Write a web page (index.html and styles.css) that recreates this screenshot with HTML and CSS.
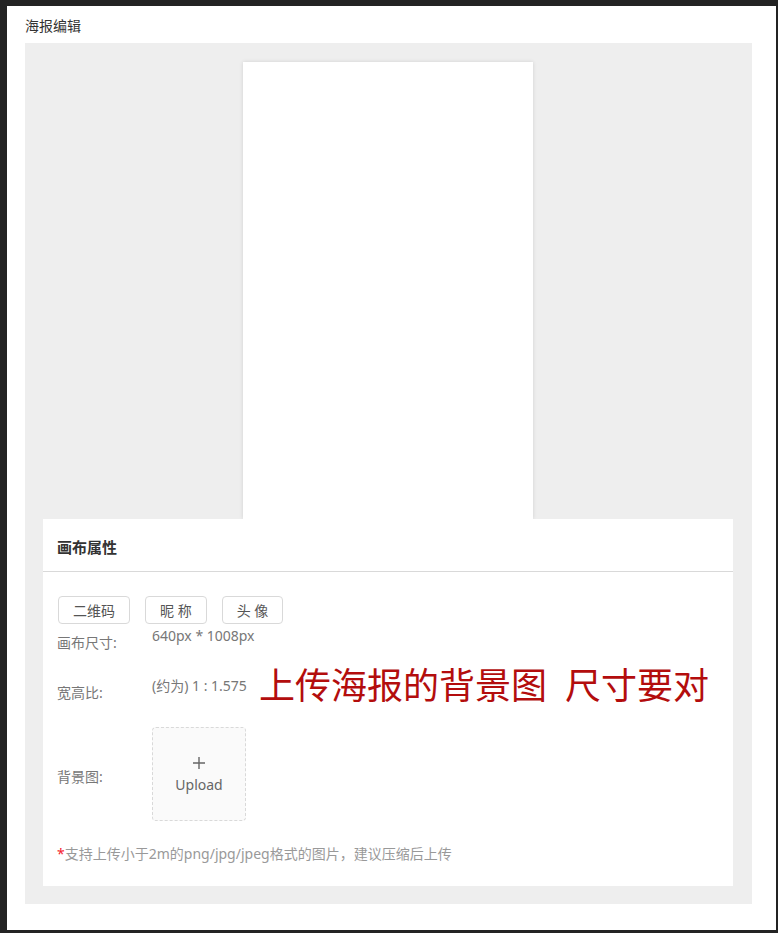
FILE: index.html
```html
<!DOCTYPE html>
<html lang="zh-CN">

<head>
  <meta charset="UTF-8" />
  <meta name="viewport" content="width=device-width, initial-scale=1" />
  <title>海报编辑</title>

  <link rel="stylesheet" href="styles.css">
</head>

<body>

  <div class="panel">
    <div class="page-title">海报编辑</div>

    <div class="stage">
      <div class="poster-canvas"></div>

      <div class="card">
        <div class="card-header">画布属性</div>

        <div class="card-body">
          <div class="tool-buttons">
            <button type="button">二维码</button>
            <button type="button">昵 称</button>
            <button type="button">头 像</button>
          </div>

          <div class="form-row row-size">
            <div class="form-label">画布尺寸:</div>
            <div class="form-value">640px * 1008px</div>
          </div>

          <div class="form-row row-ratio">
            <div class="form-label">宽高比:</div>
            <div class="form-value">
              <span>(约为) 1 : 1.575</span>
              <span class="annotation">上传海报的背景图<span class="annotation-gap"></span>尺寸要对</span>
            </div>
          </div>

          <div class="form-row row-bg">
            <div class="form-label">背景图:</div>
            <div class="upload-box">
              <svg class="upload-plus" width="14" height="14" viewBox="0 0 14 14">
                <path d="M7 1v12M1 7h12" stroke="#666" stroke-width="1.4" fill="none" />
              </svg>
              <div class="upload-text">Upload</div>
            </div>
          </div>

          <div class="upload-note"><span class="required">*</span>支持上传小于2m的png/jpg/jpeg格式的图片，建议压缩后上传</div>
        </div>
      </div>
    </div>
  </div>

</body>
</html>
```

FILE: styles.css
```css
body {
  margin: 0;
  background: #232323;
  font-family: "Noto Sans", "Noto Sans CJK SC", sans-serif;
  color: #333;
}

.panel {
  margin: 6px 2px 3px 7px;
  height: 924px;
  box-sizing: border-box;
  background: #ffffff;
  padding: 10px 24px 0 18px;
}

.page-title {
  font-size: 14px;
  line-height: 20px;
  color: #333;
  margin-bottom: 7px;
}

.stage {
  background: #eeeeee;
  padding: 19px 19px 18px 18px;
}

.poster-canvas {
  width: 290px;
  height: 457px;
  margin: 0 auto;
  background: #ffffff;
  box-shadow: 0 0 4px rgba(0, 0, 0, 0.12);
}

.card {
  position: relative;
  background: #ffffff;
}

.card-header {
  padding: 18px 14px 14px;
  font-size: 15px;
  line-height: 20px;
  font-weight: bold;
  color: #333;
  border-bottom: 1px solid #d9d9d9;
}

.card-body {
  padding: 24px 14px 24px;
}

.tool-buttons {
  display: flex;
  gap: 15px;
  padding-left: 1px;
}

.tool-buttons button {
  height: 28px;
  padding: 0 14px;
  font-family: inherit;
  font-size: 14px;
  color: #555;
  background: #ffffff;
  border: 1px solid #d9d9d9;
  border-radius: 4px;
}

.form-row {
  display: flex;
  align-items: flex-start;
}

.form-label {
  width: 95px;
  flex-shrink: 0;
  font-size: 14px;
  line-height: 16px;
  color: #777;
}

.form-value {
  font-size: 14px;
  line-height: 16px;
  color: #777;
}

.row-size {
  margin-top: 4px;
}

.row-size .form-label {
  padding-top: 7px;
}

.row-ratio {
  margin-top: 17px;
}

.row-ratio .form-label {
  margin-top: 17px;
}

.row-ratio .form-value {
  display: flex;
  align-items: center;
  height: 36px;
}

.annotation {
  margin-left: 12px;
  font-size: 36px;
  line-height: 36px;
  color: #b30d0d;
}

.annotation-gap {
  display: inline-block;
  width: 18px;
}

.row-bg {
  margin-top: 23px;
  align-items: center;
}

.row-bg .form-label {
  padding-top: 6px;
}

.upload-box {
  width: 94px;
  height: 94px;
  box-sizing: border-box;
  border: 1px dashed #d9d9d9;
  border-radius: 4px;
  background: #fafafa;
  display: flex;
  flex-direction: column;
  align-items: center;
  justify-content: center;
}

.upload-plus {
  margin-top: 2px;
}

.upload-text {
  margin-top: 6px;
  font-size: 14px;
  line-height: 18px;
  color: #666;
}

.upload-note {
  margin-top: 25px;
  font-size: 14px;
  line-height: 16px;
  color: #999;
}

.required {
  color: #f5222d;
}
```
